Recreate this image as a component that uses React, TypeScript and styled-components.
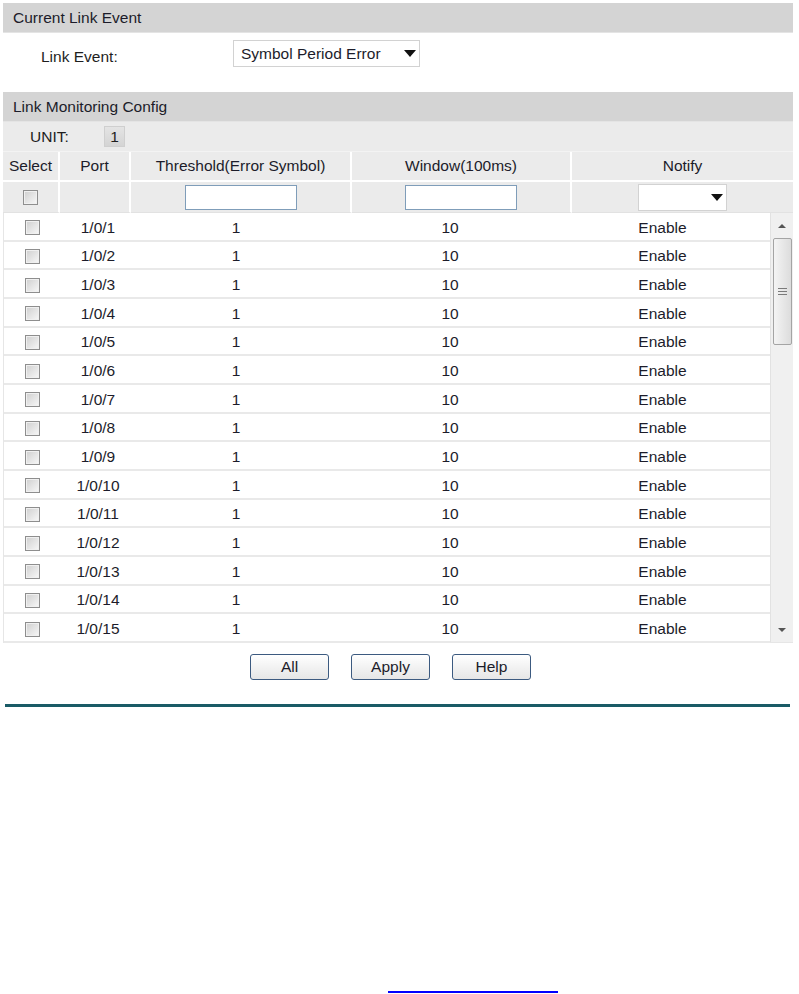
import React from "react";
import styled, { createGlobalStyle } from "styled-components";

const FS = "15.5px";

const Global = createGlobalStyle`
  html, body { margin: 0; padding: 0; background: #fff; }
  body { font-family: "Liberation Sans", Arial, sans-serif; font-size: ${FS}; color: #1e1e1e; }
  * { box-sizing: border-box; }
`;

const Page = styled.div`
  width: 799px;
  height: 994px;
  padding: 3px 6px 0 3px;
  position: relative;
  overflow: hidden;
`;

const SectionBar = styled.div`
  height: 30px;
  line-height: 30px;
  background: #d4d4d4;
  border-bottom: 1px solid #e4e4e4;
  padding-left: 10px;
  font-size: ${FS};
  color: #1c1c2a;
`;

const EventRow = styled.div`
  height: 59px;
  display: flex;
  align-items: flex-start;
  padding-top: 7px;
`;

const EventLabel = styled.div`
  width: 230px;
  padding-left: 38px;
  padding-top: 8px;
  font-size: ${FS};
`;

const SelectBox = styled.div<{ $w: number; $h: number }>`
  width: ${(p) => p.$w}px;
  height: ${(p) => p.$h}px;
  background: #fff;
  border: 1px solid #d2d2d2;
  display: flex;
  align-items: center;
  justify-content: space-between;
  padding: 0 3px 0 7px;
  font-size: ${FS};
  color: #1c1c2a;
`;

const Caret = styled.span`
  width: 0;
  height: 0;
  border-left: 6px solid transparent;
  border-right: 6px solid transparent;
  border-top: 7px solid #111;
`;

const UnitRow = styled.div`
  height: 30px;
  background: #ebebeb;
  display: flex;
  align-items: center;
  border-bottom: 1px solid #f3f3f3;
`;

const UnitLabel = styled.span`
  width: 101px;
  padding-left: 27px;
  font-size: ${FS};
`;

const UnitBox = styled.span`
  width: 21px;
  height: 21px;
  background: linear-gradient(#e4e4e4, #d4d4d4);
  border: 1px solid #cfcfcf;
  display: flex;
  align-items: center;
  justify-content: center;
  font-size: ${FS};
`;

const HeadGrid = styled.div`
  display: grid;
  grid-template-columns: 57px 71px 221px 220px 1fr;
  background: #ebebeb;
`;

const HeadCell = styled.div<{ $last?: boolean; $bottom?: boolean }>`
  height: ${(p) => (p.$bottom ? 31 : 30)}px;
  display: flex;
  align-items: center;
  justify-content: center;
  border-right: ${(p) => (p.$last ? "none" : "2px solid #fff")};
  border-bottom: ${(p) => (p.$bottom ? "1px solid #e2e2e2" : "2px solid #fff")};
  font-size: ${FS};
  color: #1c1c2a;
`;

const TextInput = styled.div`
  width: 112px;
  height: 25px;
  background: #fff;
  border: 1px solid #7f9db9;
`;

const Check = styled.span`
  width: 15px;
  height: 15px;
  border: 1px solid #8e8e8e;
  background: linear-gradient(135deg, #cfcfcf, #f8f8f8);
  box-shadow: inset 0 0 0 1px #f0f0f0;
  display: inline-block;
`;

const DataArea = styled.div`
  display: flex;
  height: 430px;
  border-left: 1px solid #e6e6e6;
  border-bottom: 1px solid #e6e6e6;
`;

const Rows = styled.div`
  width: 766px;
`;

const Row = styled.div`
  display: grid;
  grid-template-columns: 57px 74px 202px 226px 199px;
  height: 28.67px;
  border-bottom: 2px solid #e9e9e9;
  background: #fff;
  align-items: center;
  padding-top: 3px;
  font-size: ${FS};
  color: #1c1c2a;
`;

const Cell = styled.div`
  display: flex;
  justify-content: center;
  align-items: center;
`;

const ScrollTrack = styled.div`
  width: 23px;
  background: #f0f0f0;
  border-left: 1px solid #e2e2e2;
  display: flex;
  flex-direction: column;
  align-items: center;
`;

const Arrow = styled.div<{ $down?: boolean }>`
  height: 25px;
  display: flex;
  align-items: center;
  justify-content: center;
  &::after {
    content: "";
    border-left: 4px solid transparent;
    border-right: 4px solid transparent;
    ${(p) => (p.$down ? "border-top: 4px solid #555;" : "border-bottom: 4px solid #555;")}
  }
`;

const Thumb = styled.div`
  width: 19px;
  height: 107px;
  border: 1px solid #a4a4a4;
  border-radius: 2px;
  background: linear-gradient(90deg, #f4f4f4, #dcdcdc);
  display: flex;
  align-items: center;
  justify-content: center;
`;

const Spacer = styled.div`
  flex: 1;
`;

const ButtonRow = styled.div`
  display: flex;
  gap: 22px;
  padding: 11px 0 0 247px;
  height: 61px;
`;

const Button = styled.button`
  width: 79px;
  height: 26px;
  border: 1px solid #3c5a80;
  border-radius: 3px;
  background: linear-gradient(#ffffff, #e6e6e6);
  font-family: "Liberation Sans", Arial, sans-serif;
  font-size: ${FS};
  color: #1c1c2a;
  padding: 0;
`;

const TealRule = styled.div`
  margin-left: 2px;
  width: 785px;
  height: 3px;
  background: #1a5b66;
`;

const LinkLine = styled.div`
  position: absolute;
  left: 388px;
  top: 991px;
  width: 170px;
  height: 2px;
  background: #0000ff;
`;

const ports = Array.from({ length: 15 }, (_, i) => `1/0/${i + 1}`);

export default function App() {
  return (
    <Page>
      <Global />
      <SectionBar>Current Link Event</SectionBar>
      <EventRow>
        <EventLabel>Link Event:</EventLabel>
        <SelectBox $w={187} $h={27}>
          <span>Symbol Period Error</span>
          <Caret />
        </SelectBox>
      </EventRow>
      <SectionBar>Link Monitoring Config</SectionBar>
      <UnitRow>
        <UnitLabel>UNIT:</UnitLabel>
        <UnitBox>1</UnitBox>
      </UnitRow>
      <HeadGrid>
        <HeadCell>Select</HeadCell>
        <HeadCell>Port</HeadCell>
        <HeadCell>Threshold(Error Symbol)</HeadCell>
        <HeadCell>Window(100ms)</HeadCell>
        <HeadCell $last>Notify</HeadCell>
        <HeadCell $bottom>
          <Check />
        </HeadCell>
        <HeadCell $bottom />
        <HeadCell $bottom>
          <TextInput />
        </HeadCell>
        <HeadCell $bottom>
          <TextInput />
        </HeadCell>
        <HeadCell $bottom $last>
          <SelectBox $w={89} $h={27}>
            <span />
            <Caret />
          </SelectBox>
        </HeadCell>
      </HeadGrid>
      <DataArea>
        <Rows>
          {ports.map((p) => (
            <Row key={p}>
              <Cell>
                <Check />
              </Cell>
              <Cell>{p}</Cell>
              <Cell>1</Cell>
              <Cell>10</Cell>
              <Cell>Enable</Cell>
            </Row>
          ))}
        </Rows>
        <ScrollTrack>
          <Arrow />
          <Thumb>
            <svg width="9" height="9" viewBox="0 0 9 9">
              <path d="M0 1.5h9M0 4.5h9M0 7.5h9" stroke="#7a7a7a" strokeWidth="1" />
            </svg>
          </Thumb>
          <Spacer />
          <Arrow $down />
        </ScrollTrack>
      </DataArea>
      <ButtonRow>
        <Button>All</Button>
        <Button>Apply</Button>
        <Button>Help</Button>
      </ButtonRow>
      <TealRule />
      <LinkLine />
    </Page>
  );
}
